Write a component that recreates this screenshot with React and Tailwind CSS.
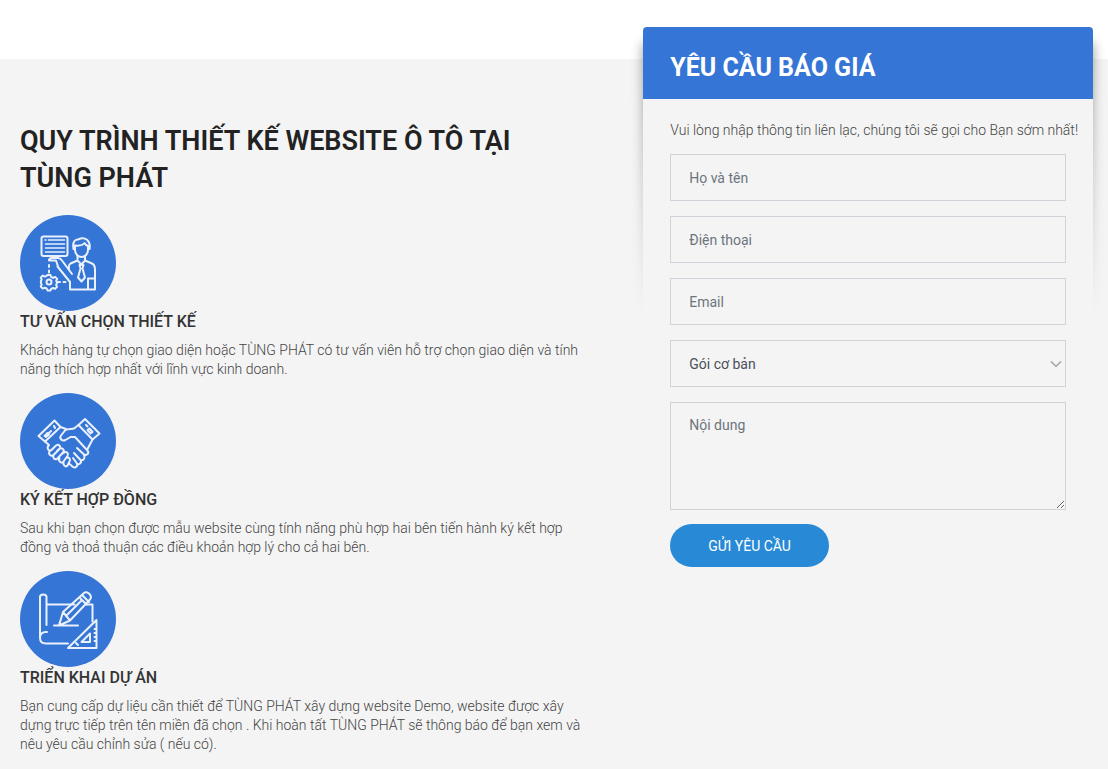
const steps = [
  {
    title: "TƯ VẤN CHỌN THIẾT KẾ",
    text: "Khách hàng tự chọn giao diện hoặc TÙNG PHÁT có tư vấn viên hỗ trợ chọn giao diện và tính năng thích hợp nhất với lĩnh vực kinh doanh.",
    Icon: ConsultIcon,
  },
  {
    title: "KÝ KẾT HỢP ĐỒNG",
    text: "Sau khi bạn chọn được mẫu website cùng tính năng phù hợp hai bên tiến hành ký kết hợp đồng và thoả thuận các điều khoản hợp lý cho cả hai bên.",
    Icon: HandshakeIcon,
  },
  {
    title: "TRIỂN KHAI DỰ ÁN",
    text: "Bạn cung cấp dự liệu cần thiết để TÙNG PHÁT xây dựng website Demo, website được xây dựng trực tiếp trên tên miền đã chọn . Khi hoàn tất TÙNG PHÁT sẽ thông báo để bạn xem và nêu yêu cầu chỉnh sửa ( nếu có).",
    Icon: BlueprintIcon,
  },
];

function Badge({ children }) {
  return (
    <svg viewBox="0 0 96 96" className="size-24" aria-hidden="true">
      <circle cx="48" cy="48" r="48" fill="#3575d6" />
      <g fill="none" stroke="#eaf1fc" strokeWidth="2" strokeLinecap="round" strokeLinejoin="round">
        {children}
      </g>
    </svg>
  );
}

function ConsultIcon() {
  return (
    <Badge>
      <rect x="21.5" y="21.500" width="26" height="19.500" rx="2" />
      <path d="M25 25h1M28.500 25h16M25.500 29h19M25.500 33h19M25.500 37h19" strokeWidth="1.600" />
      <path d="M53.500 34c-1.500-9 3-9.500 4.500-9.500 7-3.500 13 1 11.500 9.500M55 33v-2.500c5 .5 8-.5 9.500-2.500 1 2 2 2.500 3.500 3V35c0 4-3 7-6.500 7S55 39 55 35z" />
      <path d="M57.500 41.500v4L50.500 48.500c-1.500 1-2 3-1.500 6M65 41.500v4l7 3c2 1 3 3 3 6v20H50V67M57.500 45.500l4 4 3.500-4M59.500 50h4l-1 3.500 2.500 9-3.500 4-3.500-4 2.500-9z" />
      <path d="M50 67L37.500 51.500M29 45.500c0-2 1-2.500 3-2.500h6c2 0 3 1 4 2.500L52 59M29 45.500h7l2 6M68 74V63.500h7" />
      <path d="M29 50v8M38 67h10" strokeDasharray="2 3.500" />
      <circle cx="29" cy="67" r="2.500" />
      <path d="M27.500 60h3l.7 2 2 .9 2-1 2 2-1 2 .9 2v0l-1 2 1 2-2 2-2-.9-2 .9-.6 1.600h-3l-.8-2-2-.8-2 .9-2-2 1-2-.8-1.600v-2l.8-1.400-1-2 2-2 2 1 1.900-.8z" />
    </Badge>
  );
}

function HandshakeIcon() {
  return (
    <Badge>
      <path d="M34.500 27.500L18.500 43l6.500 5.500L40.500 34z" />
      <path d="M65 26L79.500 40.500l-7 6L58.500 32z" />
      <path d="M29 40l2-2M34 33l1 2M24.500 43l3-3 1.500 1.500-3 2.500M66 32l1.500 1.500M67.500 37l2-1.500 3 3.500-2 1.500z" />
      <path d="M40.500 34l5.500 2M58.500 32l-4.500 3.500c-3 1-6-.5-9 2l-4 5c-2 3 1 6 4.500 4.500l5-3h4.500L67 57c3 3 0 6-3 4.500L57 55M72.500 46.500L67 57M25 48.500l4 3.500M29 52c-3 3-.5 6.500 2.500 5l4-4c3-3 6 .5 4 3l-6 6c-2.500 2-5.500-1-4-3.500M37 58l2-2c3-2 6 1 4 3.500l-6 6.500c-2.500 1-4.500-1-3.500-4M42 61l2-1.500c3-1.500 5 1.500 3.500 3.500l-4 5.500c-2 2.500-5.500 0-4-3M46 65c3-1.500 5 1.500 3.500 3.500l-2 4c-2 2-4.500 0-4-3.500M49 70.500l4 3.500c2.500 1.500 5-1 4-3.500l-4-5.500M57 71c3 1 5-2 3.500-4L54 60M60.500 67c3 1 5-2 3.500-5" />
    </Badge>
  );
}

function BlueprintIcon() {
  return (
    <Badge>
      <path d="M26.500 54V26c0-3.500-6.500-3.500-6.500 0v41c0 3.500 2 5.500 6 5.500h22M20 67c0-3.500 2-6 6-6h1M26.500 33.500h28M67 33.500h5.500v17" />
      <path d="M39 54.500l4-13.500 21-19c3-3 9 3 6 6.500L50 49.500zM43 41l7 8.500M62 24l7 7M59.500 26.500l7 7M46 45l16-16M34 54.500h24M39 54.500l1-4" />
      <path d="M76.500 49v28H48zM70 62.500V71h-8.500zM74.500 58h2M74.500 62h2M74.500 66h2M74.500 70h2M56 72l2 2" />
    </Badge>
  );
}

const field =
  "block w-full rounded-none border border-[#ced4da] bg-transparent px-[18px] text-sm text-[#495057] placeholder:text-[#6c757d] placeholder:opacity-100 outline-none focus:border-[#3575d6]";

function QuoteForm() {
  return (
    <div className="relative -mt-8">
      <div className="absolute inset-x-0 top-0 h-72 rounded-t shadow-[0_16px_12px_rgba(0,0,0,0.45)] [mask-image:linear-gradient(to_bottom,black,transparent)] [mask-clip:no-clip] [mask-repeat:repeat-x]" />
      <div className="relative rounded-t bg-[#f4f4f4]">
        <h2 className="rounded-t bg-[#3575d6] px-[27px] pt-[23px] pb-[13px] text-[25px] leading-9 font-bold text-white">
          YÊU CẦU BÁO GIÁ
        </h2>
        <form className="px-[27px] pt-[22px]" onSubmit={(e) => e.preventDefault()}>
          <p className="mb-[14px] text-sm leading-[19px] font-light whitespace-nowrap text-[#444]">
            Vui lòng nhập thông tin liên lạc, chúng tôi sẽ gọi cho Bạn sớm nhất!
          </p>
          <div className="flex flex-col gap-[15px]">
            <input className={field + " h-[47px]"} type="text" placeholder="Họ và tên" aria-label="Họ và tên" />
            <input className={field + " h-[47px]"} type="tel" placeholder="Điện thoại" aria-label="Điện thoại" />
            <input className={field + " h-[47px]"} type="email" placeholder="Email" aria-label="Email" />
            <div className="relative">
              <select className={field + " h-[47px] appearance-none"} aria-label="Gói dịch vụ" defaultValue="basic">
                <option value="basic">Gói cơ bản</option>
              </select>
              <svg viewBox="0 0 12 8" className="pointer-events-none absolute top-5 right-1 h-2 w-3" fill="none" stroke="#999" strokeWidth="1.200" aria-hidden="true">
                <path d="M1 1.500l5 5 5-5" />
              </svg>
            </div>
            <textarea className={field + " h-[108px] resize py-3"} placeholder="Nội dung" aria-label="Nội dung" />
          </div>
          <button type="submit" className="mt-[14px] h-[43px] rounded-full bg-[#288ad6] px-[38px] text-sm text-white">
            GỬI YÊU CẦU
          </button>
        </form>
      </div>
    </div>
  );
}

export default function App() {
  return (
    <main className="min-h-screen bg-white pt-[59px] font-[Roboto,sans-serif] text-[#333]">
      <section className="min-h-[710px] bg-[#f4f4f4] px-[15px]">
        <div className="grid grid-cols-[minmax(0,9fr)_minmax(0,7fr)] gap-[50px]">
          <div className="pt-16 pl-[5px]">
            <h1 className="pr-8 text-[27px] leading-[37px] font-semibold text-[#222]">
              QUY TRÌNH THIẾT KẾ WEBSITE Ô TÔ TẠI TÙNG PHÁT
            </h1>
            <div className="mt-[18px] flex flex-col gap-[14px]">
              {steps.map(({ title, text, Icon }) => (
                <article key={title}>
                  <Icon />
                  <h3 className="text-base leading-[22px] font-medium">{title}</h3>
                  <p className="mt-2 text-sm leading-[19px] font-light text-[#444]">{text}</p>
                </article>
              ))}
            </div>
          </div>
          <QuoteForm />
        </div>
      </section>
    </main>
  );
}
